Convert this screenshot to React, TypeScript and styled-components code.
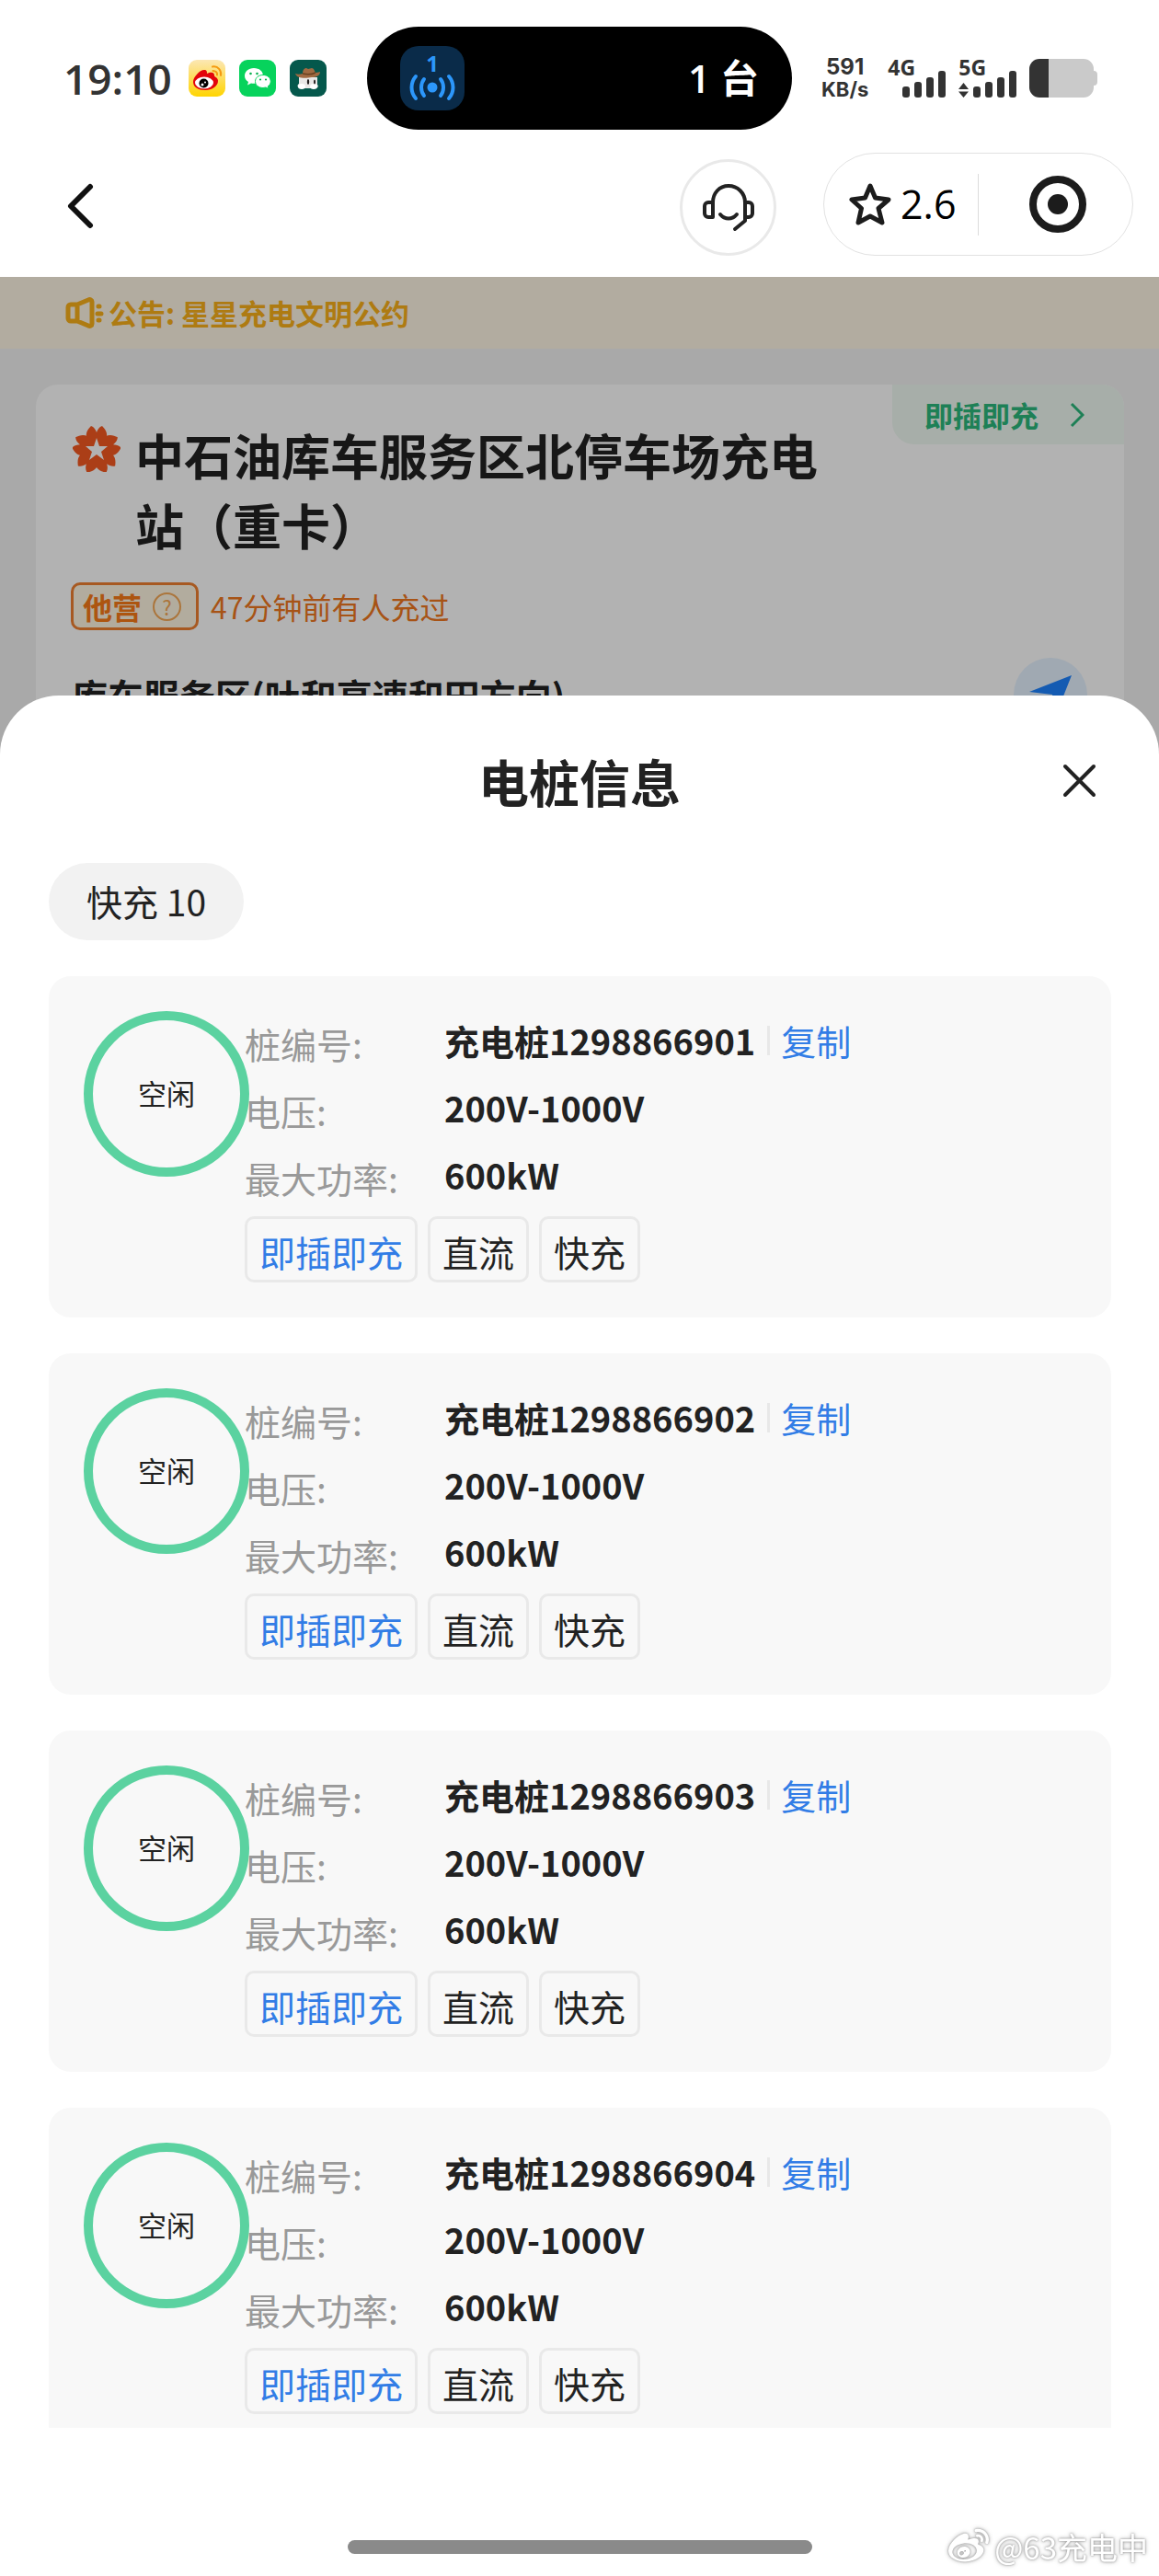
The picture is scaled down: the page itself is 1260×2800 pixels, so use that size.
import React from "react";
import styled, { createGlobalStyle } from "styled-components";
import { FaWeibo } from "react-icons/fa";

const cjk = `"Noto Sans CJK SC", "Noto Sans", sans-serif`;
const latin = `"Open Sans", "Noto Sans CJK SC", sans-serif`;

const GlobalStyle = createGlobalStyle`
  *, *::before, *::after { box-sizing: border-box; }
  body { margin: 0; background: #fff; }
  h1, h2, p, dl, dt, dd, ul { margin: 0; padding: 0; }
  ul { list-style: none; }
  button { border: 0; padding: 0; background: none; font: inherit; color: inherit; cursor: pointer; }
  svg { display: block; flex: none; }
`;

const Screen = styled.div`
  display: flex;
  flex-direction: column;
  height: 100vh;
  overflow: hidden;
  background: #fff;
  color: #222;
  font-family: ${cjk};
`;

/* ---------- status bar ---------- */

const StatusBar = styled.header`
  display: grid;
  grid-template-columns: 1fr 462px 1fr;
  align-items: center;
  flex: none;
  height: 150px;
  padding-top: 20px;
  color: #333;
  font-family: ${latin};
`;

const StatusLeft = styled.div`
  display: flex;
  align-items: center;
  gap: 15px;
  padding-left: 69px;
`;

const Clock = styled.time`
  margin-right: 3px;
  font-size: 46px;
  line-height: 56px;
  font-weight: 600;
`;

const Island = styled.div`
  display: flex;
  align-items: center;
  justify-content: space-between;
  height: 112px;
  padding: 0 36px;
  border-radius: 56px;
  background: #000;
  color: #fff;
  font-size: 42px;
  line-height: 56px;
  font-weight: 600;
`;

const IslandTile = styled.div`
  display: flex;
  flex-direction: column;
  align-items: center;
  width: 70px;
  height: 70px;
  padding-top: 8px;
  border-radius: 20px;
  background: #0a2b49;
  color: #2c97fb;
  font-size: 24px;
  line-height: 22px;
  font-weight: 700;
`;

const StatusRight = styled.div`
  display: flex;
  align-items: center;
  gap: 13px;
  padding-left: 32px;
  font-weight: 700;
`;

const Speed = styled.div`
  display: flex;
  flex-direction: column;
  align-items: center;
  margin-right: 8px;
  font-family: Inter, sans-serif;
  font-size: 22px;
  line-height: 24px;
`;

const SpeedValue = styled.span`
  font-size: 24px;
`;

const Signal = styled.div`
  display: grid;
  width: 64px;
  height: 42px;
  font-size: 23px;
  line-height: 18px;

  > * { grid-area: 1 / 1; }
  > svg { place-self: end; }
`;

/* ---------- navigation bar ---------- */

const NavBar = styled.nav`
  display: flex;
  align-items: flex-end;
  flex: none;
  padding: 16px 28px 23px 73px;
`;

const BackButton = styled.button`
  display: flex;
  align-items: center;
  height: 108px;
  margin-right: auto;
`;

const ServiceButton = styled.button`
  display: grid;
  place-items: center;
  width: 105px;
  height: 105px;
  margin-right: 51px;
  border: 3px solid #e9e9e9;
  border-radius: 50%;
`;

const Capsule = styled.div`
  display: flex;
  align-items: center;
  width: 337px;
  height: 112px;
  border: 1px solid #e2e2e2;
  border-radius: 56px;
`;

const RatingButton = styled.button`
  display: flex;
  align-items: center;
  gap: 10px;
  width: 168px;
  height: 67px;
  padding-left: 27px;
  border-right: 1px solid #dcdcdc;
  color: #000;
  font-family: ${latin};
  font-size: 43px;
  line-height: 56px;
  font-weight: 500;
`;

const TargetButton = styled.button`
  display: grid;
  place-items: center;
  flex: 1;
  padding-left: 4px;
`;

/* ---------- station page behind the sheet ---------- */

const Stage = styled.main`
  position: relative;
  flex: 1;
  min-height: 0;
  overflow: hidden;
  background: #f2f2f2;
`;

const Notice = styled.div`
  display: flex;
  align-items: center;
  gap: 5px;
  height: 78px;
  padding-left: 71px;
  background: #fff6e5;
  color: #fab01a;
  font-size: 31px;
  line-height: 46px;
  font-weight: 600;
`;

const StationCard = styled.section`
  margin: 39px 38px 0 39px;
  min-height: 600px;
  border-radius: 24px;
  background: #fff;
`;

const StationHead = styled.div`
  display: flex;
  align-items: flex-start;
`;

const StationName = styled.div`
  display: flex;
  align-items: flex-start;
  flex: 1;
  gap: 16px;
  padding: 38px 60px 0 40px;

  > svg { margin-top: 7px; }
`;

const StationTitle = styled.h1`
  font-size: 53px;
  line-height: 76px;
  font-weight: 600;
`;

const PlugBadge = styled.button`
  display: flex;
  align-items: center;
  justify-content: space-between;
  width: 252px;
  height: 65px;
  padding: 0 43px 0 35px;
  border-radius: 0 24px 0 24px;
  background: #eff9f2;
  color: #2cb87c;
  font-size: 31px;
  line-height: 46px;
  font-weight: 600;
`;

const UsageRow = styled.div`
  display: flex;
  align-items: center;
  gap: 13px;
  margin: 25px 38px 0;
  color: #f07820;
  font-size: 32px;
  line-height: 46px;
`;

const OperatorTag = styled.button`
  display: flex;
  align-items: center;
  gap: 12px;
  height: 52px;
  padding: 0 16px 0 10px;
  border: 3px solid #f08030;
  border-radius: 10px;
  background: #fff6e3;
  color: #f87a18;
  font-weight: 700;
`;

const Help = styled.span`
  display: grid;
  place-items: center;
  width: 31px;
  height: 31px;
  border: 2px solid #f5a855;
  border-radius: 50%;
  color: #f5a855;
  font-size: 22px;
  line-height: 24px;
  font-weight: 400;
`;

const AddressRow = styled.div`
  display: flex;
  align-items: center;
  justify-content: space-between;
  margin: 30px 40px 0 39px;
  font-size: 39px;
  line-height: 56px;
  font-weight: 600;
`;

const RouteButton = styled.button`
  display: grid;
  place-items: center;
  width: 80px;
  height: 80px;
  border-radius: 50%;
  background: #e5f2ff;
`;

/* ---------- bottom sheet ---------- */

const Overlay = styled.div`
  position: absolute;
  inset: 0;
  display: flex;
  flex-direction: column;
  padding-top: 455px;
  background: rgba(0, 0, 0, 0.3);
`;

const Sheet = styled.section`
  display: flex;
  flex-direction: column;
  flex: 1;
  min-height: 0;
  border-radius: 64px 64px 0 0;
  background: #fff;
`;

const SheetHead = styled.div`
  display: grid;
  grid-template-columns: 1fr auto 1fr;
  align-items: center;
  padding: 54px 68px 52px;
`;

const SheetTitle = styled.h2`
  grid-column: 2;
  font-size: 55px;
  line-height: 76px;
  font-weight: 700;
`;

const CloseButton = styled.button`
  justify-self: end;
`;

const SheetBody = styled.div`
  display: flex;
  flex-direction: column;
  flex: 1;
  min-height: 0;
  overflow: hidden;
  padding: 0 52px 0 53px;
`;

const FilterChip = styled.button`
  flex: none;
  align-self: flex-start;
  height: 84px;
  margin-bottom: 39px;
  padding: 0 41px 2px;
  border-radius: 42px;
  background: #f2f2f2;
  font-size: 39px;
  line-height: 56px;
`;

const PileList = styled.ul`
  display: flex;
  flex-direction: column;
  gap: 39px;
`;

const PileCard = styled.li`
  display: flex;
  align-items: flex-start;
  flex: none;
  padding: 35px 38px 38px;
  border-radius: 24px;
  background: #f8f8f8;
`;

const StatusRing = styled.div`
  display: grid;
  place-items: center;
  flex: none;
  width: 180px;
  height: 180px;
  margin: 3px -5px 0 0;
  padding-bottom: 3px;
  border: 10px solid #5bd2a0;
  border-radius: 50%;
  font-size: 31px;
  line-height: 46px;
`;

const PileInfo = styled.div`
  flex: 1;
  font-size: 39px;
`;

const Field = styled.div`
  display: grid;
  grid-template-columns: 217px 1fr;
  align-items: center;
  height: 73px;
  padding-bottom: 3px;
  line-height: 56px;
`;

const FieldLabel = styled.dt`
  padding-top: 5px;
  color: #999;
`;

const FieldValue = styled.dd`
  display: flex;
  align-items: center;
  font-size: 38px;
  font-weight: 600;
`;

const CopyButton = styled.button`
  display: flex;
  align-items: center;
  color: #327de6;
  font-size: 38px;
  font-weight: 400;

  &::before {
    content: "";
    width: 3px;
    height: 32px;
    margin: 0 12px 0 13px;
    background: #e8e8e8;
  }
`;

const TagRow = styled.div`
  display: flex;
  gap: 11px;
  margin-top: 7px;
`;

const Tag = styled.span<{ $accent?: boolean }>`
  height: 72px;
  padding: 5px 13px;
  border: 3px solid #e9e9e9;
  border-radius: 10px;
  color: ${(p) => (p.$accent ? "#327de6" : "#222")};
  line-height: 60px;
`;

const Footer = styled.footer`
  display: grid;
  grid-template-columns: 1fr 505px 1fr;
  align-items: center;
  flex: none;
  height: 161px;
  padding-top: 97px;
`;

const HomeIndicator = styled.div`
  grid-column: 2;
  height: 15px;
  border-radius: 8px;
  background: #8a8a8a;
`;

const Watermark = styled.p`
  display: flex;
  align-items: center;
  justify-content: flex-end;
  gap: 6px;
  padding-right: 12px;
  color: #fff;
  font-size: 33px;
  line-height: 46px;
  white-space: nowrap;
  filter: drop-shadow(0 0 1px #999) drop-shadow(0 0 2px #bbb);
`;

/* ---------- drawings ---------- */

const WeiboApp = () => (
  <svg width="40" height="40" viewBox="0 0 40 40">
    <defs>
      <linearGradient id="weiboTile" x1="0" y1="0" x2="0" y2="1">
        <stop offset="0" stopColor="#fce7b4" />
        <stop offset="1" stopColor="#ffd400" />
      </linearGradient>
    </defs>
    <rect width="40" height="40" rx="9" fill="url(#weiboTile)" />
    <path d="M5 24c0-5 7-13 12-13 3 0 3 2 3 4 4-2 8-2 8 2 0 2 4 2 4 6 0 6-7 10-14 10S5 30 5 24z" fill="#e3040b" />
    <ellipse cx="17" cy="25" rx="10" ry="6.500" fill="#fff" />
    <circle cx="16.500" cy="25.500" r="5" fill="#000" />
    <circle cx="15" cy="27" r="1.500" fill="#fff" />
    <circle cx="18" cy="24.500" r="1" fill="#fff" />
    <path d="M26 7.500c6-1 10 4 9 9.500M26.500 12c3 0 5 2 4.500 4.500" fill="none" stroke="#f59a10" strokeWidth="2" strokeLinecap="round" />
  </svg>
);

const WechatApp = () => (
  <svg width="40" height="40" viewBox="0 0 40 40">
    <rect width="40" height="40" rx="9" fill="#07d35c" />
    <path d="M16 9C10 9 6 13 6 17.500c0 3 1.500 5 4 6.500l-1 3.500 4-2c4 1 12 0 13-8C26 12.500 22 9 16 9z" fill="#fff" />
    <path d="M26 16.500c-5 0-8.500 3-8.500 7s3.500 7 8.500 7l3-.5 3 1.500-.7-2.700c2-1.300 3-3.300 3-5.300 0-4-3.500-7-8.300-7z" fill="#fff" stroke="#07d35c" strokeWidth="1" />
    <g fill="#07b14e">
      <circle cx="12.500" cy="15" r="1.300" />
      <circle cx="19.500" cy="15" r="1.300" />
      <circle cx="23" cy="21.500" r="1.100" />
      <circle cx="29" cy="21.500" r="1.100" />
    </g>
  </svg>
);

const CowboyApp = () => (
  <svg width="40" height="40" viewBox="0 0 40 40">
    <rect width="40" height="40" rx="9" fill="#05584c" />
    <path d="M10 19h20v8c2 2 0 4-3 4H12c-3 0-5-3-2-5z" fill="#e9e7e6" />
    <ellipse cx="13" cy="29" rx="4" ry="3" fill="#fff" />
    <ellipse cx="26" cy="29" rx="4" ry="3" fill="#fff" />
    <ellipse cx="20" cy="24" rx="1.200" ry="3" fill="#221c1c" />
    <ellipse cx="27" cy="24" rx="1" ry="2.500" fill="#221c1c" />
    <path d="M6 15c2 1 5 1 8 0 0-4 2-6 4-6l2 1 4-1c2 0 3 3 4 5 3 0 4-1 5-1 0 4-4 6-9 6-6 1-16 2-18-4z" fill="#a06a42" />
    <path d="M14 15c4 1 10 1 14-1" fill="none" stroke="#68401f" strokeWidth="1.500" />
  </svg>
);

const Broadcast = () => (
  <svg width="50" height="30" viewBox="0 0 50 30" fill="none" stroke="currentColor" strokeWidth="4" strokeLinecap="round">
    <circle cx="25" cy="15" r="5.500" fill="currentColor" stroke="none" />
    <path d="M16 6c-4 5-4 13 0 18M34 6c4 5 4 13 0 18M7 3c-6 7-6 17 0 24M43 3c6 7 6 17 0 24" />
  </svg>
);

const Bars = ({ traffic }: { traffic?: boolean }) => (
  <svg width="64" height="29" viewBox="0 0 64 29" fill="#333">
    {traffic && <path d="M0 20l5.500-7 5.500 7zM0 22.500h11L5.500 29z" />}
    <rect x="16" y="17" width="8" height="12" rx="3" />
    <rect x="29" y="12" width="8" height="17" rx="3" />
    <rect x="42" y="7" width="8" height="22" rx="3" />
    <rect x="55" y="0" width="8" height="29" rx="3" />
  </svg>
);

const Battery = () => (
  <svg width="74" height="42" viewBox="0 0 74 42">
    <path d="M12 0h47a11 11 0 0 1 11 11v2c3 0 4 2 4 4v8c0 2-1 4-4 4v2a11 11 0 0 1-11 11H12z" fill="#cacaca" />
    <path d="M21 0H11A11 11 0 0 0 0 11v20a11 11 0 0 0 11 11h10z" fill="#333" />
  </svg>
);

const BackIcon = () => (
  <svg width="30" height="50" viewBox="0 0 30 50" fill="none" stroke="#111" strokeWidth="6" strokeLinecap="round" strokeLinejoin="round">
    <path d="M25 4L4 25l21 21" />
  </svg>
);

const HeadsetIcon = () => (
  <svg width="56" height="52" viewBox="0 0 56 52" fill="none" stroke="#222" strokeWidth="4" strokeLinecap="round" strokeLinejoin="round">
    <path d="M11 20c0-10 7-18 17-18s18 8 18 18v20L35 49" />
    <path d="M11 20H6a4 4 0 0 0-4 4v8a4 4 0 0 0 4 4h5zM46 20h4a4 4 0 0 1 4 4v8a4 4 0 0 1-4 4h-4z" />
    <path d="M19 33c5 6 13 6 18 0" />
  </svg>
);

const StarIcon = () => (
  <svg width="46" height="46" viewBox="0 0 46 46" fill="none" stroke="#1c1c1c" strokeWidth="5" strokeLinejoin="round">
    <path d="M23 3l5.500 13L43 18 32 27.500 36 43l-13-7-13 7 3.500-15.500L3 18l14.500-2z" />
  </svg>
);

const TargetIcon = () => (
  <svg width="62" height="62" viewBox="0 0 62 62" fill="none">
    <circle cx="31" cy="31" r="27" stroke="#1c1c1c" strokeWidth="8" />
    <circle cx="31" cy="31" r="11" fill="#1c1c1c" />
  </svg>
);

const HornIcon = () => (
  <svg width="42" height="34" viewBox="0 0 42 34" fill="none" stroke="currentColor" strokeWidth="5" strokeLinecap="round" strokeLinejoin="round">
    <path d="M13 8H6a3 3 0 0 0-3 3v12a3 3 0 0 0 3 3h7l12 5c2 1 4 0 4-2V5c0-2-2-3-4-2zM13 8v18" />
    <path d="M36 10h1M35 18h4M36 25h1" />
  </svg>
);

const petals = [0, 1, 2, 3, 4];

const StationLogo = () => (
  <svg width="52" height="50" viewBox="0 0 52 50">
    <g fill="#f55a22">
      {petals.map((i) => (
        <path key={i} transform={`rotate(${i * 72} 26 26)`} d="M26 26L15 12c-1-5 2-9 5-12 3 1 5 4 6 7 1-3 3-6 6-7 3 3 6 7 5 12z" />
      ))}
      <circle cx="26" cy="26" r="16" />
    </g>
    <path d="M26 13l3 9h9l-7 6 3 9-8-6-8 6 3-9-7-6h9z" fill="#fff" />
  </svg>
);

const ChevronIcon = () => (
  <svg width="16" height="28" viewBox="0 0 16 28" fill="none" stroke="currentColor" strokeWidth="3">
    <path d="M2 2l12 12L2 26" />
  </svg>
);

const RouteIcon = () => (
  <svg width="46" height="46" viewBox="0 0 46 46">
    <path d="M46 2L0 20l25 3 4 22z" fill="#1e83ff" />
  </svg>
);

const CloseIcon = () => (
  <svg width="37" height="37" viewBox="0 0 37 37" stroke="#222" strokeWidth="4" strokeLinecap="round">
    <path d="M3 3l31 31M34 3L3 34" />
  </svg>
);

/* ---------- data ---------- */

const piles = ["1298866901", "1298866902", "1298866903", "1298866904"];

const Pile = ({ code }: { code: string }) => (
  <PileCard>
    <StatusRing>空闲</StatusRing>
    <PileInfo>
      <dl>
        <Field>
          <FieldLabel>桩编号:</FieldLabel>
          <FieldValue>
            充电桩{code}
            <CopyButton type="button">复制</CopyButton>
          </FieldValue>
        </Field>
        <Field>
          <FieldLabel>电压:</FieldLabel>
          <FieldValue>200V-1000V</FieldValue>
        </Field>
        <Field>
          <FieldLabel>最大功率:</FieldLabel>
          <FieldValue>600kW</FieldValue>
        </Field>
      </dl>
      <TagRow>
        <Tag $accent>即插即充</Tag>
        <Tag>直流</Tag>
        <Tag>快充</Tag>
      </TagRow>
    </PileInfo>
  </PileCard>
);

export default function App() {
  return (
    <Screen lang="zh-CN">
      <GlobalStyle />
      <StatusBar>
        <StatusLeft>
          <Clock>19:10</Clock>
          <WeiboApp />
          <WechatApp />
          <CowboyApp />
        </StatusLeft>
        <Island>
          <IslandTile>
            <span>1</span>
            <Broadcast />
          </IslandTile>
          <span>1 台</span>
        </Island>
        <StatusRight>
          <Speed>
            <SpeedValue>591</SpeedValue>
            <span>KB/s</span>
          </Speed>
          <Signal>
            <span>4G</span>
            <Bars />
          </Signal>
          <Signal>
            <span>5G</span>
            <Bars traffic />
          </Signal>
          <Battery />
        </StatusRight>
      </StatusBar>

      <NavBar>
        <BackButton type="button" aria-label="返回">
          <BackIcon />
        </BackButton>
        <ServiceButton type="button" aria-label="客服">
          <HeadsetIcon />
        </ServiceButton>
        <Capsule>
          <RatingButton type="button">
            <StarIcon />
            2.6
          </RatingButton>
          <TargetButton type="button" aria-label="关闭小程序">
            <TargetIcon />
          </TargetButton>
        </Capsule>
      </NavBar>

      <Stage>
        <Notice>
          <HornIcon />
          公告: 星星充电文明公约
        </Notice>
        <StationCard>
          <StationHead>
            <StationName>
              <StationLogo />
              <StationTitle>中石油库车服务区北停车场充电站（重卡）</StationTitle>
            </StationName>
            <PlugBadge type="button">
              即插即充
              <ChevronIcon />
            </PlugBadge>
          </StationHead>
          <UsageRow>
            <OperatorTag type="button">
              他营<Help>?</Help>
            </OperatorTag>
            47分钟前有人充过
          </UsageRow>
          <AddressRow>
            库车服务区(吐和高速和田方向)
            <RouteButton type="button" aria-label="导航">
              <RouteIcon />
            </RouteButton>
          </AddressRow>
        </StationCard>

        <Overlay>
          <Sheet role="dialog" aria-labelledby="sheet-title">
            <SheetHead>
              <SheetTitle id="sheet-title">电桩信息</SheetTitle>
              <CloseButton type="button" aria-label="关闭">
                <CloseIcon />
              </CloseButton>
            </SheetHead>
            <SheetBody>
              <FilterChip type="button">快充 10</FilterChip>
              <PileList>
                {piles.map((code) => (
                  <Pile key={code} code={code} />
                ))}
              </PileList>
            </SheetBody>
            <Footer>
              <HomeIndicator />
              <Watermark>
                <FaWeibo size={44} />
                @63充电中
              </Watermark>
            </Footer>
          </Sheet>
        </Overlay>
      </Stage>
    </Screen>
  );
}
